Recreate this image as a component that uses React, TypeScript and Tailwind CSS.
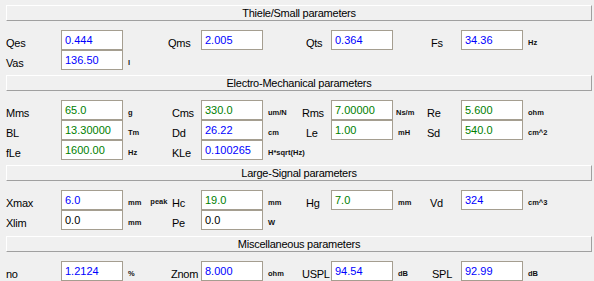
import React from "react";

type Field = {
  label: string;
  pad: string;
  value: string;
  color: string;
  unit?: string;
  unitPad?: string;
  extra?: string;
};

type Col = { labelW: string; unitW: string };

const cols: Col[] = [
  { labelW: "w-[61px]", unitW: "w-[45px]" },
  { labelW: "w-[33px]", unitW: "w-[39px]" },
  { labelW: "w-[29px]", unitW: "w-[34px]" },
  { labelW: "w-[34px]", unitW: "w-[60px]" },
];

const BLUE = "text-[#0000ff]";
const GREEN = "text-[#008000]";
const BLACK = "text-black";

function Cell({ col, field }: { col: Col; field?: Field }) {
  return (
    <div className="flex h-[20px]">
      <div className={`${col.labelW} flex h-full items-center pt-[6px]`}>
        {field && (
          <span className={`${field.pad} whitespace-nowrap text-[11px] tracking-[-0.25px] text-black`}>
            {field.label}
          </span>
        )}
      </div>
      <div className="w-[62px] h-full">
        {field && (
          <div
            className={`flex h-full items-center border border-[#a59e90] bg-white pl-[3px] text-[11px] ${field.color}`}
          >
            {field.value}
          </div>
        )}
      </div>
      <div className={`${col.unitW} flex h-full items-center pt-[5px]`}>
        {field?.unit && (
          <span className={`${field.unitPad ?? "pl-[5px]"} whitespace-nowrap text-[7.5px] font-bold text-[#111]`}>
            {field.unit}
          </span>
        )}
        {field?.extra && (
          <span className="ml-[9px] -mt-[1px] whitespace-nowrap text-[7.5px] font-bold text-[#111]">
            {field.extra}
          </span>
        )}
      </div>
    </div>
  );
}

function Row({ fields }: { fields: (Field | undefined)[] }) {
  return (
    <div className="flex">
      {cols.map((c, i) => (
        <Cell key={i} col={c} field={fields[i]} />
      ))}
    </div>
  );
}

function Header({ title }: { title: string }) {
  return (
    <div className="ml-[6px] flex h-[16px] w-[586px] items-center justify-center border border-t-white border-l-white border-b-[#a0a0a0] border-r-[#a0a0a0] text-[11px] tracking-[-0.25px] text-black">
      {title}
    </div>
  );
}

export default function App() {
  return (
    <div
      className="h-[281px] w-[594px] overflow-hidden bg-[#f0f0f0] pt-[5px]"
      style={{ fontFamily: '"Liberation Sans", Arial, sans-serif' }}
    >
      <Header title="Thiele/Small parameters" />
      <div className="mt-[9px]">
        <Row
          fields={[
            { label: "Qes", pad: "pl-[6px]", value: "0.444", color: BLUE },
            { label: "Qms", pad: "pl-0", value: "2.005", color: BLUE },
            { label: "Qts", pad: "pl-[4px]", value: "0.364", color: BLUE },
            { label: "Fs", pad: "pl-[4px]", value: "34.36", color: BLUE, unit: "Hz" },
          ]}
        />
        <Row fields={[{ label: "Vas", pad: "pl-[6px]", value: "136.50", color: BLUE, unit: "l" }]} />
      </div>

      <div className="mt-[5px]">
        <Header title="Electro-Mechanical parameters" />
      </div>
      <div className="mt-[9px]">
        <Row
          fields={[
            { label: "Mms", pad: "pl-[6px]", value: "65.0", color: GREEN, unit: "g" },
            { label: "Cms", pad: "pl-[4px]", value: "330.0", color: GREEN, unit: "um/N" },
            { label: "Rms", pad: "pl-0", value: "7.00000", color: GREEN, unit: "Ns/m", unitPad: "pl-[3px]" },
            { label: "Re", pad: "pl-0", value: "5.600", color: GREEN, unit: "ohm" },
          ]}
        />
        <Row
          fields={[
            { label: "BL", pad: "pl-[6px]", value: "13.30000", color: GREEN, unit: "Tm" },
            { label: "Dd", pad: "pl-[4px]", value: "26.22", color: BLUE, unit: "cm" },
            { label: "Le", pad: "pl-[4px]", value: "1.00", color: GREEN, unit: "mH" },
            { label: "Sd", pad: "pl-0", value: "540.0", color: GREEN, unit: "cm^2" },
          ]}
        />
        <Row
          fields={[
            { label: "fLe", pad: "pl-[6px]", value: "1600.00", color: GREEN, unit: "Hz" },
            { label: "KLe", pad: "pl-[4px]", value: "0.100265", color: BLUE, unit: "H*sqrt(Hz)" },
          ]}
        />
      </div>

      <div className="mt-[5px]">
        <Header title="Large-Signal parameters" />
      </div>
      <div className="mt-[9px]">
        <Row
          fields={[
            { label: "Xmax", pad: "pl-[6px]", value: "6.0", color: BLUE, unit: "mm", extra: "peak" },
            { label: "Hc", pad: "pl-[4px]", value: "19.0", color: GREEN, unit: "mm" },
            { label: "Hg", pad: "pl-[4px]", value: "7.0", color: GREEN, unit: "mm" },
            { label: "Vd", pad: "pl-[3px]", value: "324", color: BLUE, unit: "cm^3" },
          ]}
        />
        <Row
          fields={[
            { label: "Xlim", pad: "pl-[6px]", value: "0.0", color: BLACK, unit: "mm" },
            { label: "Pe", pad: "pl-[4px]", value: "0.0", color: BLACK, unit: "W" },
          ]}
        />
      </div>

      <div className="mt-[6px]">
        <Header title="Miscellaneous parameters" />
      </div>
      <div className="mt-[9px]">
        <Row
          fields={[
            { label: "no", pad: "pl-[6px]", value: "1.2124", color: BLUE, unit: "%" },
            { label: "Znom", pad: "pl-[3px]", value: "8.000", color: BLUE, unit: "ohm" },
            { label: "USPL", pad: "pl-0", value: "94.54", color: BLUE, unit: "dB" },
            { label: "SPL", pad: "pl-[5px]", value: "92.99", color: BLUE, unit: "dB" },
          ]}
        />
        <Row fields={[{ label: "", pad: "pl-[6px]", value: "", color: BLUE }]} />
      </div>
    </div>
  );
}
